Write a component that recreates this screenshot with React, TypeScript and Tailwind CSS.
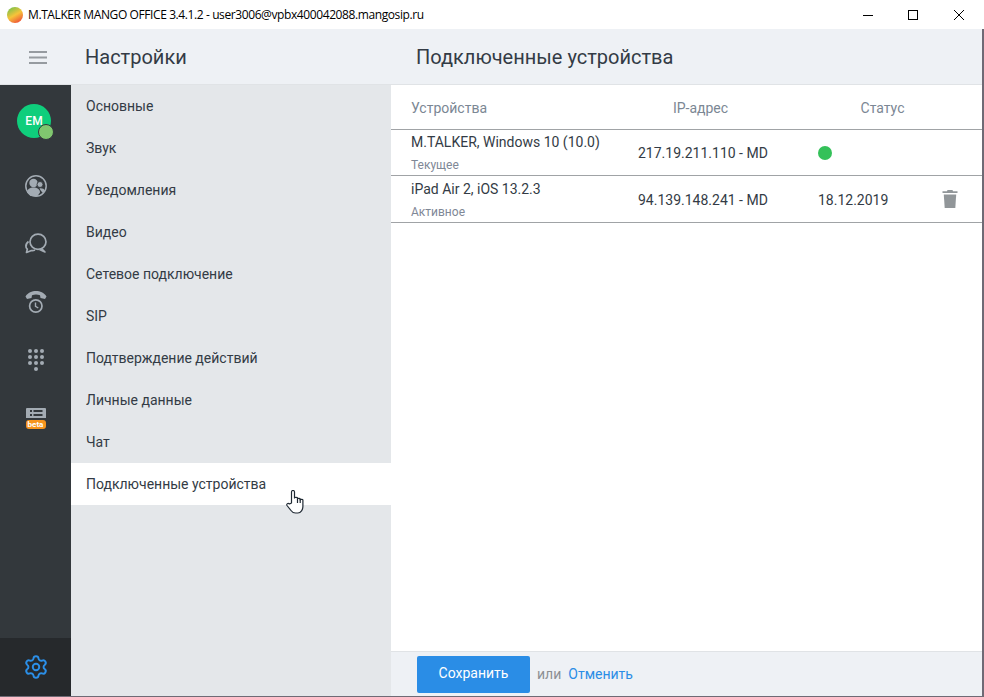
import { Settings } from "lucide-react";

const menu = [
  "Основные",
  "Звук",
  "Уведомления",
  "Видео",
  "Сетевое подключение",
  "SIP",
  "Подтверждение действий",
  "Личные данные",
  "Чат",
  "Подключенные устройства",
];

function ContactsIcon() {
  return (
    <svg width="24" height="24" viewBox="0 0 24 24" className="block">
      <circle cx="12" cy="12" r="10.2" fill="none" stroke="#a3abb3" strokeWidth="1.5" />
      <circle cx="9.5" cy="9" r="4.2" fill="#a3abb3" />
      <path d="M3 18.500c0-3.500 3-5 6.500-5s6.500 1.500 6.500 5l-2.500 3.500h-7z" fill="#a3abb3" />
      <circle cx="16" cy="10.500" r="3" fill="#a3abb3" stroke="#33383c" strokeWidth="0.9" />
      <path d="M15.500 14.500c2.500-.5 4.500.5 5.500 2l-2 2.800-2.500-3z" fill="#a3abb3" />
    </svg>
  );
}

function ChatIcon() {
  return (
    <svg width="24" height="24" viewBox="0 0 24 24" fill="none" stroke="#a3abb3" strokeWidth="1.700" className="block">
      <ellipse cx="14" cy="10.800" rx="8" ry="7.600" />
      <path d="M17.500 17.500l3.500 3.500-5.500-2.500" strokeLinejoin="round" />
      <path d="M4.500 10.500C2.500 12 1.600 14 2 16c.2 1 .8 1.700 1.300 2.200L2.500 21.500l5-2c1.300.1 2.500-.1 3.500-.6" strokeLinejoin="round" />
    </svg>
  );
}

function PhoneClockIcon() {
  return (
    <svg width="24" height="24" viewBox="0 0 24 24" className="block">
      <path
        d="M1.500 6.500C4 2.500 8 1 12 1s8 1.500 10.500 5.500L21 9l-4.500-1-.5-2.800c-2.600-.8-5.400-.8-8 0L7.500 8 3 9z"
        fill="#a3abb3"
      />
      <circle cx="11.800" cy="16" r="6.200" fill="none" stroke="#a3abb3" strokeWidth="1.700" />
      <path d="M11.500 12.500v3.800l2.800 1.700" fill="none" stroke="#a3abb3" strokeWidth="1.400" />
    </svg>
  );
}

function DialpadIcon() {
  const dots = [
    [2, 2], [8, 2], [14, 2],
    [2, 8], [8, 8], [14, 8],
    [2, 14], [8, 14], [14, 14],
    [8, 20],
  ];
  return (
    <svg width="16" height="22" viewBox="0 0 16 22" fill="#a3abb3" className="block">
      {dots.map(([x, y]) => (
        <circle key={`${x}-${y}`} cx={x} cy={y} r="2" />
      ))}
    </svg>
  );
}

function BetaIcon() {
  return (
    <div className="flex flex-col items-center gap-[2px]">
      <svg width="20" height="10" viewBox="0 0 20 10" className="block">
        <path d="M1 0h18a1 1 0 0 1 1 1v9H0V1a1 1 0 0 1 1-1z" fill="#a3abb3" />
        <rect x="4" y="2" width="2" height="2" fill="#33383c" />
        <rect x="7.500" y="2" width="9" height="2" fill="#33383c" />
        <rect x="4" y="6" width="2" height="2" fill="#33383c" />
        <rect x="7.500" y="6" width="9" height="2" fill="#33383c" />
      </svg>
      <div className="w-5 h-[9px] rounded-[3px] bg-[#f7941d] text-white text-[8px] leading-[9px] font-bold text-center">beta</div>
    </div>
  );
}

function TrashIcon() {
  return (
    <svg width="16" height="18" viewBox="0 0 16 18" fill="#919699" className="block">
      <path d="M5.500 0h5l.5 1.200H15.500V3H.5V1.200H5z" />
      <path d="M1.800 4.500h12.400L13.300 18H2.700z" />
    </svg>
  );
}

function HandCursor() {
  return (
    <svg width="18" height="25" viewBox="0 0 18 25" fill="#ffffff" stroke="#1f2933" strokeWidth="1.200" strokeLinejoin="round" className="block">
      <path d="M5.500 13V2a1.500 1.500 0 0 1 3 0v6c0-1 3-1 3 0v1c0-1 2.700-1 2.700 0v1c0-1 2.700-1 2.700 0v6.500c0 3-2 6.500-5 6.500H9.500c-2 0-3.500-1-4.500-2.500L1 15.500c-.8-1.500 1-3 2.500-1.500z" />
      <path d="M11.500 8v5M14.200 9v4" fill="none" />
    </svg>
  );
}

export default function App() {
  return (
    <div className="w-[984px] h-[697px] flex flex-col bg-[#6f6a75] overflow-hidden font-['Roboto',sans-serif] text-[#333b45]">
      {/* title bar */}
      <div className="h-[29px] shrink-0 flex items-center bg-white">
        <div className="ml-[7px] w-4 h-4 rounded-full bg-[linear-gradient(150deg,#7ec24a_10%,#f6c33a_50%,#ee4036_95%)]" />
        <span className="ml-[5px] text-[12px] text-black font-['Open_Sans',sans-serif] tracking-[-0.4px]">
          M.TALKER MANGO OFFICE 3.4.1.2 - user3006@vpbx400042088.mangosip.ru
        </span>
        <div className="ml-auto mr-5 flex items-center gap-[36px]">
          <svg width="10" height="10" viewBox="0 0 10 10" className="block mr-[-1px]">
            <path d="M0 5.500h10" stroke="#000" strokeWidth="1" />
          </svg>
          <svg width="10" height="10" viewBox="0 0 10 10" className="block">
            <rect x="0.500" y="0.500" width="9" height="9" fill="none" stroke="#000" strokeWidth="1" />
          </svg>
          <svg width="10" height="10" viewBox="0 0 10 10" className="block">
            <path d="M0 0l10 10M10 0L0 10" stroke="#000" strokeWidth="1" />
          </svg>
        </div>
      </div>

      <div className="h-[667px] w-[982px] flex flex-col bg-white">
        {/* header */}
        <div className="h-[56px] shrink-0 flex bg-[#eef1f5] border-b border-[#e0e3e6] pt-px">
          <div className="w-[71px] flex items-center pl-[29px]">
            <svg width="18" height="13" viewBox="0 0 18 13" className="block">
              <path d="M0 1h18M0 6.500h18M0 12h18" stroke="#969ba0" strokeWidth="2" />
            </svg>
          </div>
          <div className="w-[320px] pl-[14px] flex items-center text-[20px]">Настройки</div>
          <div className="pl-[25px] flex items-center text-[20px]">Подключенные устройства</div>
        </div>

        <div className="flex-1 flex min-h-0">
          {/* rail */}
          <div className="w-[71px] shrink-0 flex flex-col bg-[#33383c]">
            <div className="flex-1 flex flex-col items-center pt-[19px]">
              <div className="relative self-start ml-[17px] w-[34px] h-[34px] rounded-full bg-[#0fce7c] text-white text-[12px] font-medium flex items-center justify-center">
                EM
                <span className="absolute right-[-3px] bottom-[-2px] w-[16px] h-[16px] rounded-full bg-[#80c76f] border-[1.5px] border-[#33383c]" />
              </div>
              <div className="mt-[36px]"><ContactsIcon /></div>
              <div className="mt-[33px]"><ChatIcon /></div>
              <div className="mt-[35px]"><PhoneClockIcon /></div>
              <div className="mt-[35px]"><DialpadIcon /></div>
              <div className="mt-[37px]"><BetaIcon /></div>
            </div>
            <div className="h-[58px] bg-[#26292c] flex items-center justify-center">
              <Settings size={26} className="text-[#2b8fe8]" strokeWidth={1.800} />
            </div>
          </div>

          {/* settings menu */}
          <div className="w-[320px] shrink-0 bg-[#e4e7ea]">
            {menu.map((item) => {
              const active = item === "Подключенные устройства";
              return (
                <div key={item} className={`relative h-[42px] pl-[15px] pt-px flex items-center text-[14px] ${active ? "bg-white" : ""}`}>
                  {item}
                  {active && (
                    <span className="absolute left-[215px] top-[27px]">
                      <HandCursor />
                    </span>
                  )}
                </div>
              );
            })}
          </div>

          {/* content */}
          <div className="flex-1 flex flex-col min-w-0">
            <div className="flex-1">
              <div className="h-[45px] flex items-center border-b border-[#a0a3a6] text-[14px] text-[#7b8794] pt-[2px]">
                <div className="w-[228px] pl-5">Устройства</div>
                <div className="w-[166px] text-center">IP-адрес</div>
                <div className="w-[200px] text-center">Статус</div>
              </div>
              <div className="h-[46px] flex items-center border-b border-[#a0a3a6] text-[14px] pt-[2px]">
                <div className="w-[247px] pl-5">
                  <div className="leading-[20px] mt-[-2px]">M.TALKER, Windows 10 (10.0)</div>
                  <div className="text-[12px] leading-[16px] mt-[5px] text-[#7f8896]">Текущее</div>
                </div>
                <div className="w-[180px]">217.19.211.110 - MD</div>
                <span className="w-[14px] h-[14px] rounded-full bg-[#34c159] mb-[2px]" />
              </div>
              <div className="h-[47px] flex items-center border-b border-[#a0a3a6] text-[14px] pt-[2px]">
                <div className="w-[247px] pl-5">
                  <div className="leading-[20px] mt-[-2px]">iPad Air 2, iOS 13.2.3</div>
                  <div className="text-[12px] leading-[16px] mt-[5px] text-[#7f8896]">Активное</div>
                </div>
                <div className="w-[180px]">94.139.148.241 - MD</div>
                <div className="w-[124px]">18.12.2019</div>
                <div className="mb-[2px]"><TrashIcon /></div>
              </div>
            </div>
            <div className="h-[45px] shrink-0 flex items-center bg-[#eef1f5] border-t border-[#e0e3e6] pl-[26px] text-[14px]">
              <button className="w-[113px] h-[37px] rounded-[2px] bg-[#2a8de6] text-white pb-[2px]">Сохранить</button>
              <span className="ml-[7px] text-[#8c8f93]">или</span>
              <span className="ml-[7px] text-[#2a8de6]">Отменить</span>
            </div>
          </div>
        </div>
      </div>
    </div>
  );
}
